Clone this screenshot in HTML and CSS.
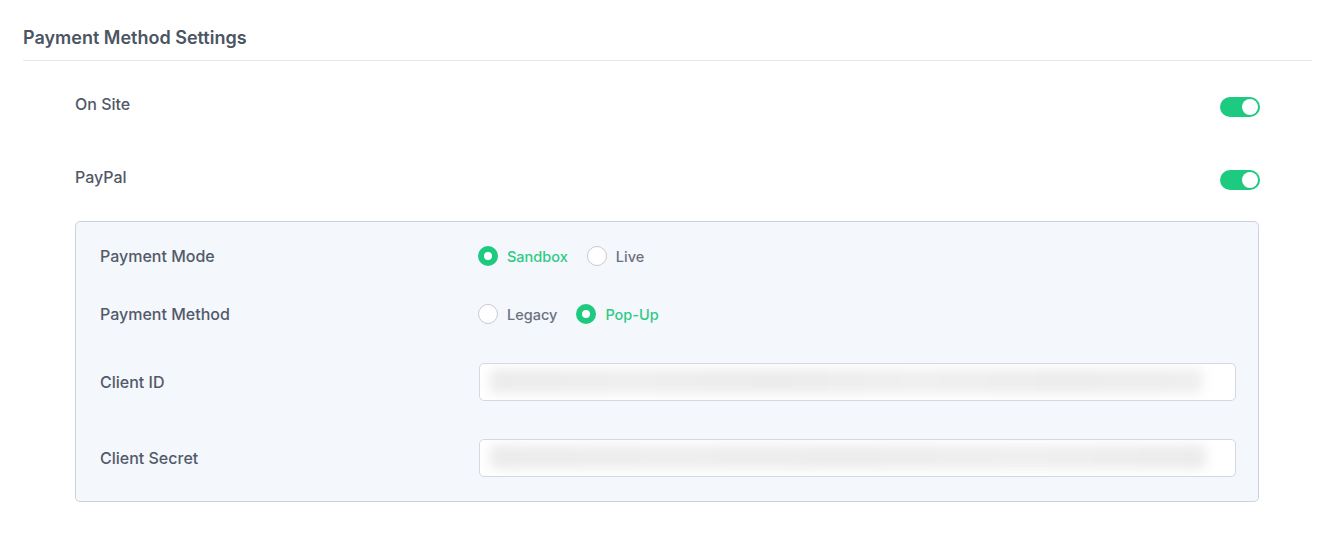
FILE: index.html
```html
<!DOCTYPE html>
<html lang="en">
<head>
  <meta charset="UTF-8">
  <meta name="viewport" content="width=device-width, initial-scale=1.0">
  <title>Payment Method Settings</title>
  <link rel="stylesheet" href="styles.css">
</head>
<body>
  <div class="page">
    <h2 class="title">Payment Method Settings</h2>

    <div class="methods">
      <!-- On site -->
      <div class="method">
        <span class="method-name">On Site</span>
        <span class="toggle on"><span class="knob"></span></span>
      </div>

      <!-- PayPal -->
      <div class="method">
        <span class="method-name">PayPal</span>
        <span class="toggle on"><span class="knob"></span></span>
      </div>

      <div class="panel">
        <div class="row row-radio">
          <span class="label">Payment Mode</span>
          <div class="options">
            <label class="option checked"><span class="radio"></span>Sandbox</label>
            <label class="option"><span class="radio"></span>Live</label>
          </div>
        </div>

        <div class="row row-radio second">
          <span class="label">Payment Method</span>
          <div class="options">
            <label class="option"><span class="radio"></span>Legacy</label>
            <label class="option checked"><span class="radio"></span>Pop-Up</label>
          </div>
        </div>

        <div class="row row-input third">
          <span class="label">Client ID</span>
          <div class="field"><div class="secret secret-a"></div></div>
        </div>

        <div class="row row-input fourth">
          <span class="label">Client Secret</span>
          <div class="field"><div class="secret secret-b"></div></div>
        </div>
      </div>
    </div>
  </div>
</body>
</html>
```

FILE: styles.css
```css
* {
  margin: 0;
  padding: 0;
  box-sizing: border-box;
}

body {
  background: #fff;
  font-family: 'Inter', 'Liberation Sans', sans-serif;
  color: #4b5362;
}

.page {
  padding-top: 26px;
}

.title {
  margin: 0 24px 0 23px;
  padding-bottom: 10px;
  border-bottom: 1px solid #e3e6eb;
  font-size: 18px;
  line-height: 24px;
  font-weight: 600;
  color: #4b5462;
}

.methods {
  padding: 33px 76px 0 75px;
}

.method {
  display: flex;
  justify-content: space-between;
  align-items: flex-start;
  height: 23px;
  margin-bottom: 50px;
}

.method:nth-child(2) {
  margin-bottom: 31px;
}

.method-name {
  font-size: 16px;
  line-height: 20px;
  font-weight: 500;
  color: #505866;
}

.toggle {
  display: flex;
  width: 40px;
  height: 20px;
  margin-top: 3px;
  padding: 2px;
  border-radius: 10px;
  background: #dadde3;
}

.toggle.on {
  background: #1ec980;
  justify-content: flex-end;
}

.knob {
  width: 16px;
  height: 16px;
  border-radius: 50%;
  background: #fff;
}

.panel {
  margin-right: 1px;
  padding: 14px 22px 24px 24px;
  background: #f4f7fb;
  border: 1px solid #cdd2dd;
  border-radius: 5px;
}

.row {
  display: flex;
  align-items: center;
}

.row-radio {
  height: 40px;
}

.row-input {
  height: 38px;
}

.second { margin-top: 18px; }
.third { margin-top: 29px; }
.fourth { margin-top: 38px; }

.label {
  width: 379px;
  flex-shrink: 0;
  font-size: 16px;
  font-weight: 500;
  color: #525a6a;
}

.options {
  display: flex;
  gap: 19px;
  margin-left: -1px;
}

.option {
  display: flex;
  align-items: center;
  gap: 9px;
  font-size: 14.5px;
  font-weight: 500;
  color: #6b7280;
}

.option.checked {
  color: #2ecb84;
}

.radio {
  width: 20px;
  height: 20px;
  border-radius: 50%;
  background: #fff;
  border: 1px solid #c6cad2;
}

.option.checked .radio {
  border: 6px solid #1ec980;
}

.field {
  flex: 1;
  height: 38px;
  padding: 5px 10px 7px;
  background: #fff;
  border: 1px solid #d4d8e1;
  border-radius: 5px;
  overflow: hidden;
}

.secret {
  height: 24px;
  filter: blur(6px);
  border-radius: 4px;
}

.secret-a {
  width: 712px;
  background: linear-gradient(90deg, #ebebeb 0%, #eeeeee 20%, #ebebeb 40%, #efefef 60%, #ececec 80%, #eeeeee 100%);
}

.secret-b {
  width: 716px;
  background: linear-gradient(90deg, #ebebeb 0%, #eeeeee 25%, #ececec 50%, #efefef 75%, #ebebeb 100%);
}
```
